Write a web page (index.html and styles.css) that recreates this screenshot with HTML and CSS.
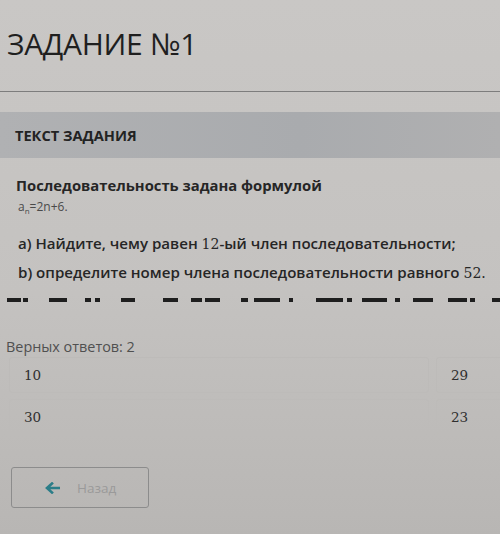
FILE: index.html
```html
<!DOCTYPE html>
<html lang="ru">
<head>
<meta charset="utf-8">
<link rel="stylesheet" href="styles.css">
</head>
<body>
<div class="page">
  <h1 class="title">ЗАДАНИЕ №1</h1>
  <div class="rule"></div>
  <div class="band">ТЕКСТ ЗАДАНИЯ</div>
  <div class="task">
    <p class="lead">Последовательность задана формулой</p>
    <p class="formula">a<sub>n</sub>=2n+6.</p>
    <p class="q qa">а) Найдите, чему равен <span class="m">12</span>-ый член последовательности;</p>
    <p class="q">b) определите номер члена последовательности равного <span class="m">52.</span></p>
    <svg class="dashes" width="500" height="6" viewBox="0 0 500 6">
      <g fill="#1e1e1e">
        <rect x="7" y="1" width="14" height="4"/><rect x="23" y="1" width="5" height="4"/>
        <rect x="49" y="1" width="18" height="4"/>
        <rect x="85" y="1" width="6" height="4"/><rect x="95" y="1" width="5" height="4"/>
        <rect x="121" y="1" width="14" height="4"/>
        <rect x="163" y="1" width="15" height="4"/>
        <rect x="191" y="1" width="11" height="4"/><rect x="205" y="1" width="15" height="4"/>
        <rect x="241" y="1" width="7" height="4"/><rect x="254" y="1" width="26" height="4"/><rect x="289" y="1" width="4" height="4"/>
        <rect x="316" y="1" width="27" height="4"/><rect x="347" y="1" width="5" height="4"/><rect x="362" y="1" width="25" height="4"/><rect x="395" y="1" width="5" height="4"/>
        <rect x="413" y="1" width="20" height="4"/>
        <rect x="448" y="1" width="19" height="4"/><rect x="470" y="1" width="5" height="4"/>
        <rect x="492" y="1" width="8" height="4"/>
      </g>
    </svg>
  </div>
  <div class="count">Верных ответов: 2</div>
  <div class="answers">
    <div class="opt"><span class="m">10</span></div>
    <div class="opt opt-r"><span class="m">29</span></div>
    <div class="opt"><span class="m">30</span></div>
    <div class="opt opt-r"><span class="m">23</span></div>
  </div>
  <div class="nav">
    <button class="back">
      <svg class="arrow" width="16" height="12" viewBox="0 0 16 12"><path d="M15 6H4M8 1.5L3 6l5 4.5" fill="none" stroke="#2b7d88" stroke-width="2.6" stroke-linecap="square"/></svg>
      <span class="back-label">Назад</span>
    </button>
  </div>
</div>
</body>
</html>
```
FILE: styles.css
```css
html, body {
  margin: 0;
  padding: 0;
}
body {
  width: 500px;
  height: 534px;
  overflow: hidden;
  background: linear-gradient(180deg, #c9c7c5 0%, #c4c2c0 55%, #b8b6b4 100%);
  font-family: "Open Sans", "Liberation Sans", sans-serif;
  color: #262626;
}
.page {
  padding-top: 24px;
}
.title {
  margin: 0 0 0 7px;
  font-weight: 400;
  font-size: 30px;
  line-height: 40px;
  color: #1f1f1f;
  letter-spacing: -0.3px;
}
.rule {
  margin-top: 27px;
  height: 1px;
  background: #7d7d7d;
}
.band {
  margin-top: 20px;
  height: 46px;
  line-height: 46px;
  padding-left: 15px;
  background: linear-gradient(90deg, #b0b1b3, #a9abae 60%, #b0b0b1);
  font-weight: 700;
  font-size: 14.6px;
  color: #232323;
}
.task {
  padding: 17px 0 0 0;
}
.task p {
  margin: 0;
}
.lead {
  padding-left: 16px;
  font-weight: 700;
  font-size: 14.8px;
  line-height: 20px;
}
.formula {
  padding-left: 18px;
  margin-top: 4px !important;
  font-size: 12px;
  line-height: 16px;
  color: #4a4a4a;
}
.formula sub {
  font-size: 8px;
}
.q {
  padding-left: 18px;
  font-weight: 600;
  font-size: 15.1px;
  line-height: 28px;
  white-space: nowrap;
}
.qa {
  margin-top: 10px !important;
}
.m {
  font-family: "DejaVu Serif", "Liberation Serif", serif;
  font-weight: 400;
  font-size: 14px;
}
.dashes {
  display: block;
  margin-top: 10px;
}
.count {
  margin-top: 34px;
  padding-left: 6px;
  font-size: 14.4px;
  line-height: 20px;
  color: #505050;
}
.answers {
  margin-top: 0;
  display: grid;
  grid-template-columns: 420px 1fr;
  column-gap: 7px;
  row-gap: 6px;
  padding-left: 9px;
}
.opt {
  height: 34px;
  border: 1px solid #bdbbb9;
  border-radius: 3px;
  padding-left: 14px;
  display: flex;
  align-items: center;
  color: #2f2f2f;
}
.opt-r {
  border-right: none;
  border-radius: 3px 0 0 3px;
}
.opt .m {
  font-size: 13.5px;
}
.nav {
  margin-top: 32px;
  padding-left: 11px;
}
.back {
  width: 138px;
  height: 41px;
  border: 1px solid #8c8c8c;
  border-radius: 3px;
  background: transparent;
  display: flex;
  align-items: center;
  padding: 0 0 0 32px;
  font-family: "Open Sans", "Liberation Sans", sans-serif;
}
.arrow {
  display: block;
}
.back-label {
  margin-left: 17px;
  font-size: 13.5px;
  color: #9a9a9a;
}
```
